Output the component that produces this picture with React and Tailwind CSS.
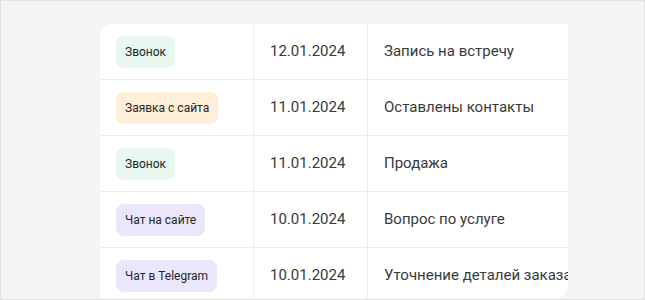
const rows = [
  { type: 'Звонок', tone: 'bg-[#e8f7ef]', date: '12.01.2024', note: 'Запись на встречу' },
  { type: 'Заявка с сайта', tone: 'bg-[#ffefd9]', date: '11.01.2024', note: 'Оставлены контакты' },
  { type: 'Звонок', tone: 'bg-[#e8f7ef]', date: '11.01.2024', note: 'Продажа' },
  { type: 'Чат на сайте', tone: 'bg-[#ece6fd]', date: '10.01.2024', note: 'Вопрос по услуге' },
  { type: 'Чат в Telegram', tone: 'bg-[#ece6fd]', date: '10.01.2024', note: 'Уточнение деталей заказа' },
];

export default function App() {
  return (
    <div
      className="w-[645px] h-[300px] bg-[#f4f4f4] border border-[#e4e4e4] overflow-hidden pt-[23px] pl-[99px]"
      style={{ fontFamily: 'Roboto, "Noto Sans", sans-serif' }}
    >
      <div className="w-[468px] h-[274px] bg-white rounded-tl-xl rounded-br-xl overflow-hidden">
        {rows.map((r, i) => (
          <div key={i} className="flex h-[56px] border-b border-[#ececec]">
            <div className="w-[154px] shrink-0 flex items-center pl-4 border-r border-[#ececec]">
              <span className={`${r.tone} h-8 px-[9px] rounded-lg flex items-center text-[12px] font-normal text-[#262626]`}>
                {r.type}
              </span>
            </div>
            <div className="w-[114px] shrink-0 flex items-center pl-4 border-r border-[#ececec] text-[15px] text-[#3a3a3a]">
              {r.date}
            </div>
            <div className="flex-1 flex items-center pl-4 text-[15px] text-[#3a3a3a] whitespace-nowrap overflow-hidden">
              {r.note}
            </div>
          </div>
        ))}
      </div>
    </div>
  );
}
